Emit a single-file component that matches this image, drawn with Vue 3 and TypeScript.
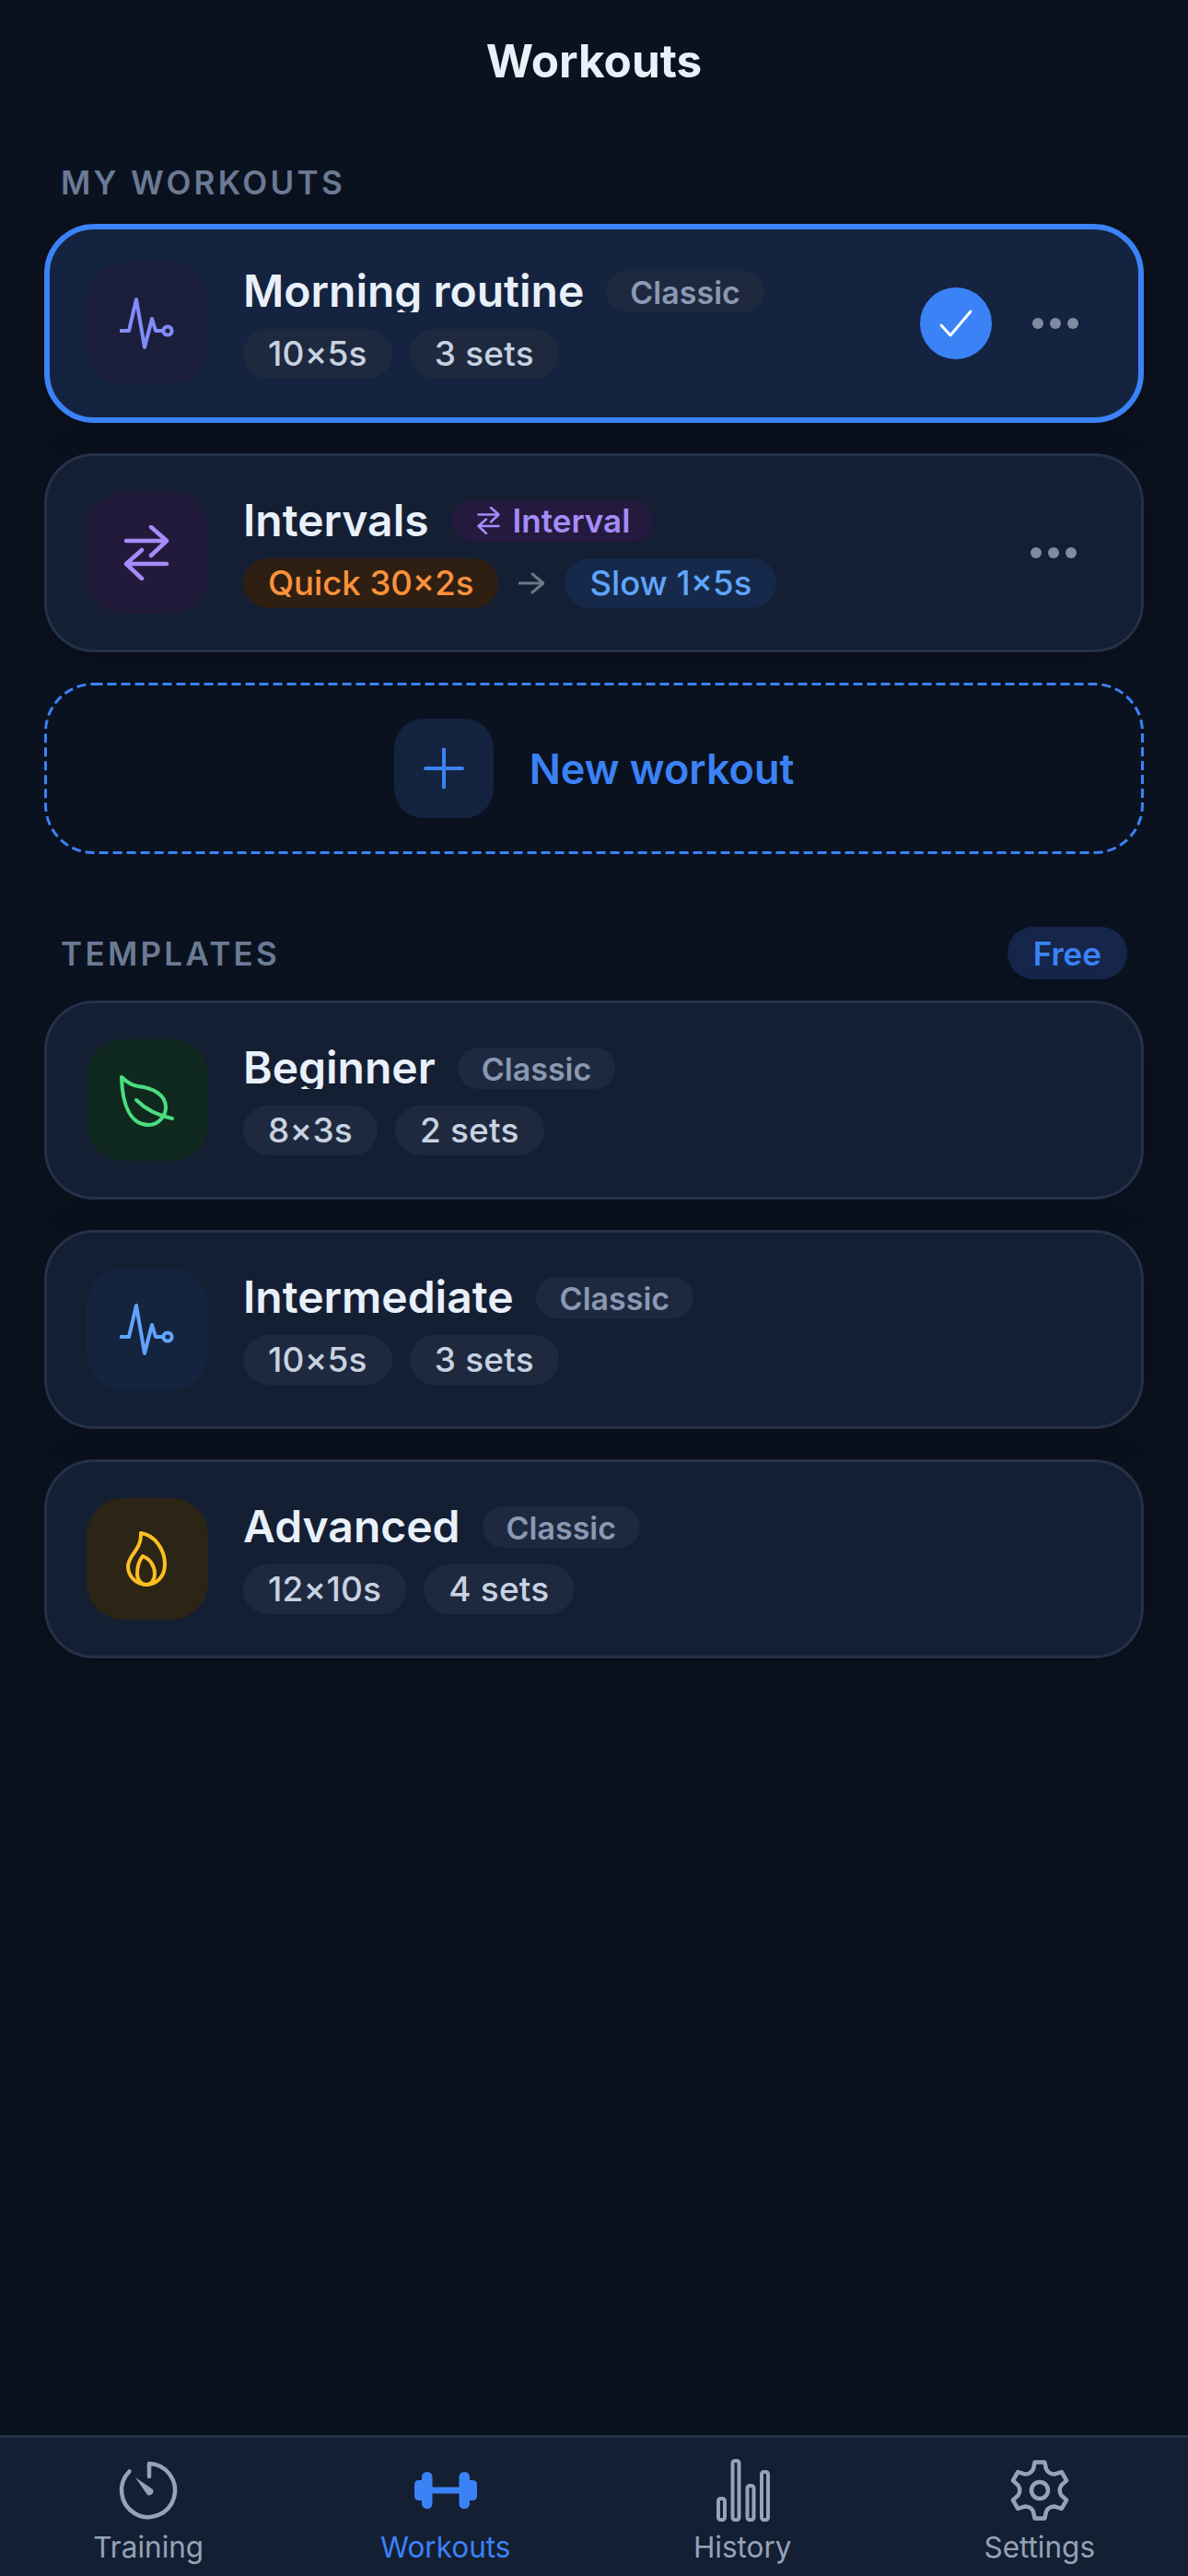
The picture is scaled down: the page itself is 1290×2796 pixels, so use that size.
<script setup lang="ts">
type Plan = {
  name: string
  kind: string
  tone: string
  icon: string
  chips: string[]
}

const templates: Plan[] = [
  { name: 'Beginner', kind: 'Classic', tone: 'green', icon: 'leaf', chips: ['8×3s', '2 sets'] },
  { name: 'Intermediate', kind: 'Classic', tone: 'blue', icon: 'pulse', chips: ['10×5s', '3 sets'] },
  { name: 'Advanced', kind: 'Classic', tone: 'amber', icon: 'flame', chips: ['12×10s', '4 sets'] },
]

const tabs = ['Training', 'Workouts', 'History', 'Settings']

function polar(r: number, deg: number): string {
  const a = (deg * Math.PI) / 180
  return `${(36 + r * Math.cos(a)).toFixed(2)} ${(36 + r * Math.sin(a)).toFixed(2)}`
}

// six teeth, one pointing straight up
function gearPath(): string {
  let d = ''
  for (let i = 0; i < 6; i++) {
    const a = -90 + i * 60
    d += `${i === 0 ? 'M' : 'L'}${polar(24, a - 17)} L${polar(31, a - 10)} L${polar(31, a + 10)} L${polar(24, a + 17)} `
    d += `Q${polar(20, a + 30)} ${polar(24, a + 43)} `
  }
  return d + 'Z'
}

const gear = gearPath()
</script>

<template>
  <div class="app">
    <main class="content">
      <h1 class="title">Workouts</h1>

      <div class="section-head first">
        <span class="section-label">MY WORKOUTS</span>
      </div>

      <div class="list">
        <div class="card selected">
          <div class="icon-box indigo">
            <svg class="glyph" viewBox="0 0 60 60" fill="none" stroke="currentColor" stroke-width="4" stroke-linecap="round" stroke-linejoin="round">
              <path d="M1 38H10L18 4L27 56L35 25L39 38H47" />
              <circle cx="52" cy="38" r="4.6" />
            </svg>
          </div>
          <div class="info">
            <div class="name-row">
              <span class="name">Morning routine</span>
              <span class="kind">Classic</span>
            </div>
            <div class="chips">
              <span class="chip">10×5s</span>
              <span class="chip">3 sets</span>
            </div>
          </div>
          <div class="check">
            <svg viewBox="0 0 78 78" fill="none" stroke="#fff" stroke-width="3" stroke-linecap="round" stroke-linejoin="round">
              <path d="M23 41L33 52L55 26" />
            </svg>
          </div>
          <div class="dots"><i></i><i></i><i></i></div>
        </div>

        <div class="card">
          <div class="icon-box purple">
            <svg class="glyph" viewBox="0 0 60 60" fill="none" stroke="currentColor" stroke-width="4.5" stroke-linecap="round" stroke-linejoin="round">
              <path d="M7 17H51M34 2L51 17L34 33" />
              <path d="M51 42H7M24 27L7 42L24 58" />
            </svg>
          </div>
          <div class="info">
            <div class="name-row">
              <span class="name">Intervals</span>
              <span class="kind interval">
                <svg class="mini" viewBox="0 0 60 60" fill="none" stroke="currentColor" stroke-width="5" stroke-linecap="round" stroke-linejoin="round">
                  <path d="M7 17H51M34 2L51 17L34 33" />
                  <path d="M51 42H7M24 27L7 42L24 58" />
                </svg>
                Interval
              </span>
            </div>
            <div class="chips">
              <span class="chip quick">Quick 30×2s</span>
              <svg class="arrow" viewBox="0 0 28 24" fill="none" stroke="#6b7789" stroke-width="3" stroke-linecap="round" stroke-linejoin="round">
                <path d="M1 12H27M15 2L27 12L15 22" />
              </svg>
              <span class="chip slow">Slow 1×5s</span>
            </div>
          </div>
          <div class="dots"><i></i><i></i><i></i></div>
        </div>

        <div class="new-card">
          <svg class="dash" fill="none"><rect /></svg>
          <div class="plus-box">
            <svg viewBox="0 0 44 44" fill="none" stroke="currentColor" stroke-width="4" stroke-linecap="round">
              <path d="M22 1V43M2 22H42" />
            </svg>
          </div>
          <span class="new-label">New workout</span>
        </div>
      </div>

      <div class="section-head second">
        <span class="section-label">TEMPLATES</span>
        <span class="free">Free</span>
      </div>

      <div class="list">
        <div v-for="t in templates" :key="t.name" class="card">
          <div class="icon-box" :class="t.tone">
            <svg class="glyph" viewBox="0 0 60 60" fill="none" stroke="currentColor" stroke-width="4" stroke-linecap="round" stroke-linejoin="round">
              <template v-if="t.icon === 'leaf'">
                <path d="M2 5C6 9 12 14 20 15C36 17 50 24 50 38C50 47 42 57 32 57C14 57 3 40 2 5Z" />
                <path d="M18 30C26 38 38 46 57 50" />
              </template>
              <template v-else-if="t.icon === 'pulse'">
                <path d="M1 38H10L18 4L27 56L35 25L39 38H47" />
                <circle cx="52" cy="38" r="4.6" />
              </template>
              <template v-else>
                <path d="M23 2C38 4 49 20 49 36C49 49 40 58 29 58C18 58 9 49 9 38C9 26 24 20 23 2Z" />
                <path d="M25 27C33 30 38 38 38 46C38 53 34 58 29 58C23 58 19 53 19 46C19 38 21 32 25 27Z" />
              </template>
            </svg>
          </div>
          <div class="info">
            <div class="name-row">
              <span class="name">{{ t.name }}</span>
              <span class="kind">{{ t.kind }}</span>
            </div>
            <div class="chips">
              <span v-for="c in t.chips" :key="c" class="chip">{{ c }}</span>
            </div>
          </div>
        </div>
      </div>
    </main>

    <nav class="tabbar">
      <div v-for="tab in tabs" :key="tab" class="tab" :class="{ active: tab === 'Workouts' }">
        <svg v-if="tab === 'Training'" viewBox="0 0 72 72" fill="none" stroke="currentColor" stroke-width="4.5" stroke-linecap="round" stroke-linejoin="round">
          <path d="M37 21V7A29 29 0 1 1 15.5 15.5" />
          <path d="M22 22L41 35A4.5 4.5 0 0 1 35 41Z" fill="currentColor" stroke="none" />
        </svg>
        <svg v-else-if="tab === 'Workouts'" viewBox="0 0 72 72" fill="currentColor">
          <rect x="2" y="25" width="13" height="22" rx="4.5" />
          <rect x="10" y="16" width="11.5" height="40" rx="5.5" />
          <rect x="21" y="32.5" width="30" height="7" />
          <rect x="50.5" y="16" width="11.5" height="40" rx="5.5" />
          <rect x="57" y="25" width="13" height="22" rx="4.5" />
        </svg>
        <svg v-else-if="tab === 'History'" viewBox="0 0 72 72" fill="none" stroke="currentColor" stroke-width="4" stroke-linejoin="round">
          <rect x="10" y="45" width="7" height="23" rx="2.5" />
          <rect x="25.5" y="4" width="7" height="64" rx="2.5" />
          <rect x="41.5" y="31" width="7" height="37" rx="2.5" />
          <rect x="57" y="16" width="7" height="52" rx="2.5" />
        </svg>
        <svg v-else viewBox="0 0 72 72" fill="none" stroke="currentColor" stroke-width="4.5" stroke-linecap="round" stroke-linejoin="round">
          <path :d="gear" />
          <circle cx="36" cy="36" r="9" />
        </svg>
        <span class="tab-label">{{ tab }}</span>
      </div>
    </nav>
  </div>
</template>

<style>
html,
body {
  margin: 0;
  background: #0b121f;
}
</style>

<style scoped>
.app {
  height: 100vh;
  display: flex;
  flex-direction: column;
  background: #0b121f;
  font-family: Inter, "Liberation Sans", sans-serif;
  color: #e9f0fa;
}

.content {
  flex: 1;
  padding: 0 48px;
  overflow: hidden;
}

.title {
  margin: 0;
  height: 132px;
  line-height: 132px;
  text-align: center;
  font-size: 49.5px;
  font-weight: 700;
}

.section-head {
  display: flex;
  align-items: center;
  justify-content: space-between;
  padding: 0 18px;
}

.section-head.first {
  height: 40px;
  margin-top: 46px;
  margin-bottom: 25px;
}

.section-head.second {
  height: 57px;
  margin-top: 79px;
  margin-bottom: 23px;
}

.section-label {
  font-size: 35px;
  font-weight: 600;
  letter-spacing: 3.3px;
  color: #6b7a94;
}

.free {
  height: 57px;
  line-height: 58px;
  padding: 0 28px;
  border-radius: 29px;
  background: #15264a;
  color: #3b82f6;
  font-size: 35px;
  font-weight: 600;
}

.list {
  display: flex;
  flex-direction: column;
  gap: 33px;
}

.card {
  box-sizing: border-box;
  height: 216px;
  padding: 0 70px 0 43px;
  display: flex;
  align-items: center;
  background: #141f33;
  border: 3px solid #253149;
  border-radius: 54px;
  box-shadow: 0 6px 36px rgba(0, 0, 0, 0.22);
}

.card.selected {
  padding: 0 65px 0 40px;
  background: #14233f;
  border: 6px solid #3b82f6;
}

.icon-box {
  flex: none;
  width: 132px;
  height: 132px;
  border-radius: 40px;
  display: flex;
  align-items: center;
  justify-content: center;
}

.glyph {
  width: 60px;
  height: 60px;
}

.indigo {
  background: #1b1f3c;
  color: #818cf8;
}

.purple {
  background: #221a3b;
  color: #a78bfa;
}

.green {
  background: #10291f;
  color: #4ade80;
}

.blue {
  background: #14243f;
  color: #60a5fa;
}

.amber {
  background: #2c2414;
  color: #fbbf24;
}

.info {
  flex: 1;
  min-width: 0;
  margin-left: 38px;
  margin-top: 2px;
  display: flex;
  flex-direction: column;
  gap: 18px;
}

.name-row {
  display: flex;
  align-items: center;
  gap: 24px;
}

.name {
  height: 46px;
  line-height: 46px;
  overflow: hidden;
  font-size: 48px;
  font-weight: 600;
  white-space: nowrap;
}

.kind {
  height: 45px;
  line-height: 48px;
  padding: 0 26px;
  border-radius: 23px;
  background: #1e293f;
  color: #8a99b3;
  font-size: 34px;
  font-weight: 600;
}

.kind.interval {
  display: flex;
  align-items: center;
  gap: 11px;
  background: #241a3d;
  color: #a78bfa;
  font-size: 35px;
}

.mini {
  width: 30px;
  height: 30px;
}

.chips {
  display: flex;
  align-items: center;
  gap: 19px;
}

.chip {
  height: 54px;
  line-height: 54px;
  padding: 0 27px;
  border-radius: 27px;
  background: #1e293f;
  color: #c8d2e0;
  font-size: 37px;
  font-weight: 500;
  letter-spacing: 0.2px;
  white-space: nowrap;
}

.chip.quick {
  background: #2f1f12;
  color: #fb923c;
  font-size: 36.5px;
  letter-spacing: 0;
}

.chip.slow {
  background: #16294a;
  color: #60a5fa;
  font-size: 36.5px;
  letter-spacing: 0;
}

.arrow {
  width: 28px;
  height: 24px;
  margin: 0 3px;
}

.check {
  flex: none;
  width: 78px;
  height: 78px;
  border-radius: 50%;
  background: #3b82f6;
}

.check svg {
  display: block;
  width: 78px;
  height: 78px;
}

.dots {
  flex: none;
  margin-left: 44px;
  display: flex;
  gap: 7px;
}

.dots i {
  width: 12px;
  height: 12px;
  border-radius: 50%;
  background: #7e8ba1;
}

.new-card {
  position: relative;
  box-sizing: border-box;
  height: 186px;
  display: flex;
  align-items: center;
  justify-content: center;
  gap: 39px;
  border-radius: 54px;
}

.dash {
  position: absolute;
  inset: 0;
  width: 100%;
  height: 100%;
}

.dash rect {
  x: 1.5px;
  y: 1.5px;
  width: calc(100% - 3px);
  height: calc(100% - 3px);
  rx: 52px;
  stroke: #3b82f6;
  stroke-width: 3px;
  stroke-dasharray: 10 5;
}

.plus-box {
  width: 108px;
  height: 108px;
  border-radius: 32px;
  background: #14233f;
  color: #3b82f6;
  display: flex;
  align-items: center;
  justify-content: center;
}

.plus-box svg {
  width: 44px;
  height: 44px;
}

.new-label {
  font-size: 45px;
  font-weight: 600;
  color: #3b82f6;
}

.tabbar {
  flex: none;
  box-sizing: border-box;
  height: 153px;
  padding-top: 21px;
  display: flex;
  background: #141f33;
  border-top: 3px solid #253149;
}

.tab {
  flex: 1;
  display: flex;
  flex-direction: column;
  align-items: center;
  color: #94a3b8;
}

.tab svg {
  width: 72px;
  height: 72px;
}

.tab.active {
  color: #3b82f6;
}

.tab-label {
  margin-top: 6px;
  line-height: 40px;
  font-size: 31.5px;
  font-weight: 400;
}
</style>
